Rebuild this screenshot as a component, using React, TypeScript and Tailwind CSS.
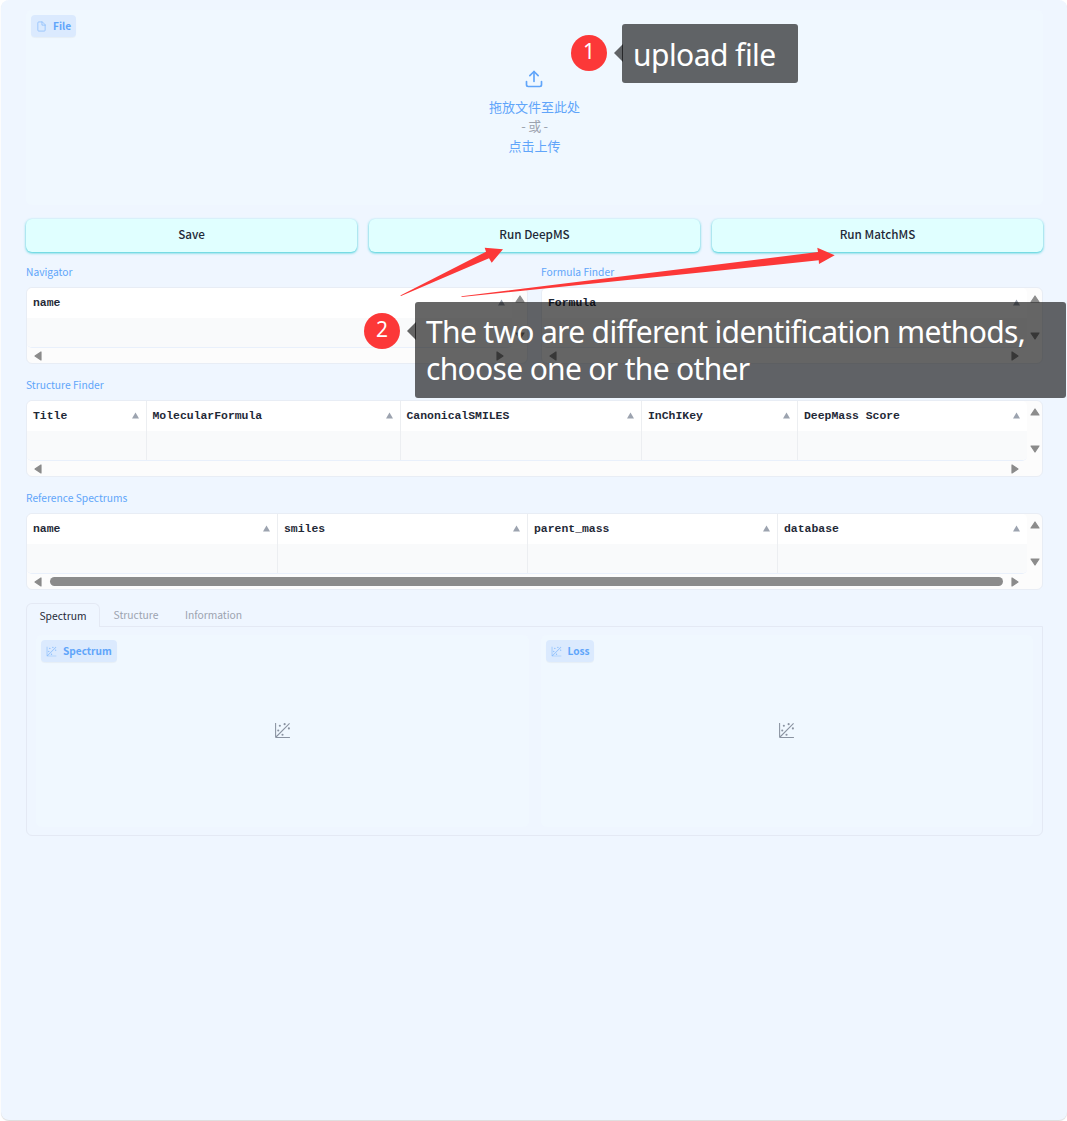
import React from "react";

const ui = "font-['Noto_Sans_CJK_SC',sans-serif]";

function PlotIcon({ className }: { className: string }) {
  return (
    <svg viewBox="0 0 32 32" fill="currentColor" className={className}>
      <circle cx="20" cy="4" r="2" />
      <circle cx="8" cy="16" r="2" />
      <circle cx="28" cy="12" r="2" />
      <circle cx="11" cy="7" r="2" />
      <circle cx="16" cy="24" r="2" />
      <path d="M30 3.413L28.586 2L4 26.585V2H2v26a2 2 0 0 0 2 2h26v-2H5.413Z" />
    </svg>
  );
}

function FileIcon() {
  return (
    <svg viewBox="0 0 24 24" fill="none" stroke="currentColor" strokeWidth="1.7" strokeLinecap="round" strokeLinejoin="round" className="size-[11px] text-[#8dbffc]">
      <path d="M13 2H6a2 2 0 0 0-2 2v16a2 2 0 0 0 2 2h12a2 2 0 0 0 2-2V9z" />
      <polyline points="13 2 13 9 20 9" />
    </svg>
  );
}

function UploadIcon() {
  return (
    <svg viewBox="0 0 24 24" fill="none" stroke="currentColor" strokeWidth="2" strokeLinecap="round" strokeLinejoin="round" className="mr-[2px] size-5">
      <path d="M21 15v4a2 2 0 0 1-2 2H5a2 2 0 0 1-2-2v-4" />
      <polyline points="17 8 12 3 7 8" />
      <line x1="12" y1="3" x2="12" y2="15" />
    </svg>
  );
}

function Tag({ icon, text }: { icon: React.ReactNode; text: string }) {
  return (
    <div className="flex h-[22px] w-fit items-center gap-[6px] rounded-[4px] bg-[#dbeafe] pr-[5px] pl-[5px] text-[10.1px] leading-none font-bold text-[#60a5fa] shadow-[0_1px_1px_rgba(0,0,0,0.04)]">
      {icon}
      <span>{text}</span>
    </div>
  );
}

function Button({ text }: { text: string }) {
  return (
    <button className="flex h-[33px] flex-1 items-center justify-center rounded-[6px] bg-[#e0ffff] pb-[3px] text-[11.7px] font-medium text-[#1f2937] shadow-[0_1px_3px_rgba(60,205,215,0.65),0_1px_2px_rgba(90,215,222,0.7)]">
      {text}
    </button>
  );
}

function Arrow({ dir }: { dir: "left" | "right" | "up" | "down" }) {
  const points = {
    left: "2,5 8,1 8,9",
    right: "8,5 2,1 2,9",
    up: "5,2 9,8 1,8",
    down: "5,8 9,2 1,2",
  }[dir];
  return (
    <svg viewBox="0 0 10 10" className="size-[10px] text-[#8b8b8b]" fill="currentColor" stroke="currentColor" strokeWidth="1.2" strokeLinejoin="round">
      <polygon points={points} />
    </svg>
  );
}

function Table({ label, cols, thumb = false }: { label: string; cols: [string, string][]; thumb?: boolean }) {
  return (
    <section className="min-w-0 flex-1">
      <div className="flex h-4 items-center text-[10.25px] leading-4 text-[#60a5fa]">{label}</div>
      <div className="mt-[7px] h-[77px] overflow-hidden rounded-[6px] border border-[#e8edf5] bg-[#fcfcfc]">
        <div className="flex h-[60px]">
          <div className="flex min-w-0 flex-1 overflow-hidden rounded-[5px] border-b border-[#e9f0fb] bg-white">
            {cols.map(([name, width], i) => (
              <div key={name} className={`flex flex-col ${width} ${i ? "border-l border-[#eceef1]" : ""}`}>
                <div className="flex h-[30px] items-center justify-between pr-[7px] pb-px pl-[6px]">
                  <span className="font-['Liberation_Mono',monospace] text-[11.43px] leading-none font-bold text-[#1f2937]">{name}</span>
                  <svg viewBox="0 0 8 7" className="h-[7px] w-[7px] fill-[#9ca3af]">
                    <path d="M4 0l4 7H0z" />
                  </svg>
                </div>
                <div className="flex-1 bg-[#f9fafb]" />
              </div>
            ))}
          </div>
          <div className="flex w-[15px] flex-col items-center justify-between pt-[6px] pb-[7px]">
            <Arrow dir="up" />
            <Arrow dir="down" />
          </div>
        </div>
        <div className="flex h-[15px] items-center pr-[22px] pl-[6px]">
          <Arrow dir="left" />
          <div className={thumb ? "mr-[7px] ml-[7px] h-[9px] flex-1 rounded-full bg-[#8b8b8b]" : "flex-1"} />
          <Arrow dir="right" />
        </div>
      </div>
    </section>
  );
}

function Plot({ title }: { title: string }) {
  return (
    <div className="flex flex-1 flex-col rounded-[6px] bg-[#f0f8ff] pt-[5px] pl-[5px]">
      <Tag icon={<PlotIcon className="size-[11px] text-[#8dbffc]" />} text={title} />
      <div className="flex flex-1 justify-center pt-[60px] pr-[5px]">
        <PlotIcon className="size-[17px] text-[#8a93a1]" />
      </div>
    </div>
  );
}

function Step({ n, className }: { n: string; className: string }) {
  return (
    <div className={`absolute flex size-9 items-center justify-center rounded-full bg-[#fc3838] pb-[3px] font-['Noto_Sans',sans-serif] text-[21px] leading-none text-white ${className}`}>
      {n}
    </div>
  );
}

function Callout({ className, children }: { className: string; children: React.ReactNode }) {
  return (
    <div className={`absolute rounded-[3px] bg-black/60 pl-[11px] font-['Noto_Sans',sans-serif] text-[30px] leading-[37px] whitespace-nowrap text-white ${className}`}>
      <svg viewBox="0 0 9 18" className="absolute top-[20px] -left-2 h-[18px] w-[9px] fill-black/60">
        <path d="M0 9L9 0v18z" />
      </svg>
      {children}
    </div>
  );
}

export default function App() {
  return (
    <div className={`relative h-[1121px] w-[1067px] overflow-hidden bg-white pl-px ${ui}`}>
      <main className="flex h-[1120px] flex-col rounded-[8px] bg-[#eff6ff] pt-[10px] pr-6 pl-[25px] shadow-[0_1px_1px_rgba(0,0,0,0.14)]">
        <div className="flex h-[195px] flex-col rounded-[6px] bg-[#f0f8ff] pt-[5px] pl-[5px]">
          <Tag icon={<FileIcon />} text="File" />
          <div className="flex flex-col items-center pt-[32px] pr-[5px] text-[13px] leading-[19.5px] text-[#60a5fa]">
            <UploadIcon />
            <div className="mt-[8px]">拖放文件至此处</div>
            <div className="-mt-px mb-px tracking-[-0.3px] text-[#9ca3af]">- 或 -</div>
            <div>点击上传</div>
          </div>
        </div>
        <div className="mt-[14px] flex gap-3">
          <Button text="Save" />
          <Button text="Run DeepMS" />
          <Button text="Run MatchMS" />
        </div>
        <div className="mt-3 flex gap-[13px]">
          <Table label="Navigator" cols={[["name", "w-full"]]} />
          <Table label="Formula Finder" cols={[["Formula", "w-full"]]} />
        </div>
        <div className="mt-[13px] flex">
          <Table
            label="Structure Finder"
            cols={[
              ["Title", "w-[118.5px]"],
              ["MolecularFormula", "w-[254px]"],
              ["CanonicalSMILES", "w-[241.5px]"],
              ["InChIKey", "w-[156px]"],
              ["DeepMass Score", "flex-1"],
            ]}
          />
        </div>
        <div className="mt-[13px] flex">
          <Table
            label="Reference Spectrums"
            thumb
            cols={[
              ["name", "w-[250px]"],
              ["smiles", "w-[250px]"],
              ["parent_mass", "w-[250px]"],
              ["database", "flex-1"],
            ]}
          />
        </div>
        <nav className="mt-[13px] flex h-[23px] shrink-0 text-[10.3px] leading-none text-[#9ca3af]">
          <div className="z-10 flex h-[24px] w-[74px] items-center justify-center rounded-t-[6px] border border-b-0 border-[#e4e9f4] bg-[#eff6ff] pt-px text-[#1f2937]">Spectrum</div>
          <div className="flex w-[72px] items-center justify-center pt-[2px]">Structure</div>
          <div className="flex w-[83px] items-center justify-center pt-[2px]">Information</div>
        </nav>
        <div className="flex h-[210px] gap-[12px] rounded-b-[6px] border border-[#e4e9f4] px-[9px] pt-[8px] pb-[8px]">
          <Plot title="Spectrum" />
          <Plot title="Loss" />
        </div>
      </main>

      <svg viewBox="0 0 1067 1121" className="absolute top-0 left-0 h-[1121px] w-[1067px] fill-[#fc3838]">
        <path d="M400.3 295.6L486 251.7L484.7 247.7L503 249.3L491.7 262.7L489 258.3L401 296z" />
        <path d="M461.5 296.3L818 252L817.3 247.7L834.7 255.3L819 264L818.7 260.3L461.5 297z" />
      </svg>
      <Step n="1" className="top-[35px] left-[571px]" />
      <Step n="2" className="top-[313px] left-[364px]" />
      <Callout className="top-6 left-[622px] h-[59px] w-[176px] pt-[12px] tracking-[-0.55px]">upload file</Callout>
      <Callout className="top-[302px] left-[415px] h-[96px] w-[651px] pt-[11px] tracking-[-0.67px]">
        The two are different identification methods,
        <br />
        choose one or the other
      </Callout>
    </div>
  );
}
